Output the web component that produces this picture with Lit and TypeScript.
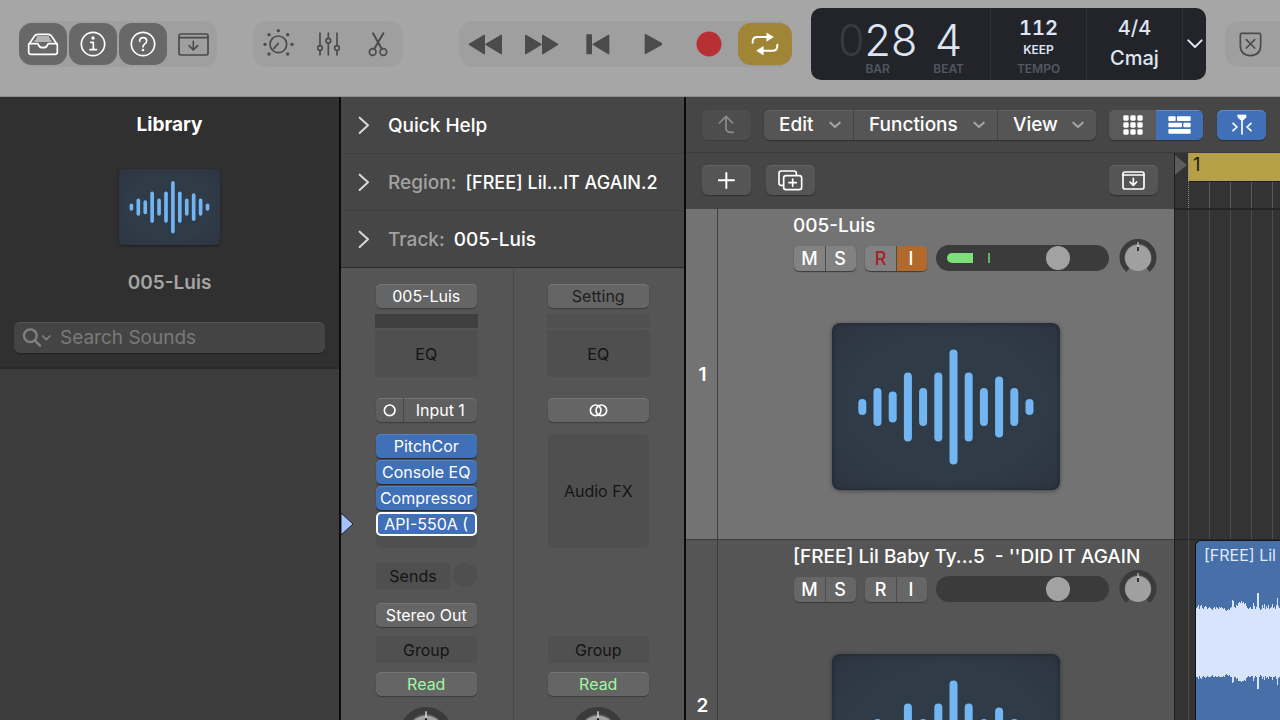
import { LitElement, html, svg, css, nothing } from "lit";
import { customElement, property } from "lit/decorators.js";

const base = css`
  * { box-sizing: border-box; }
  :host { font-family: Inter, "Liberation Sans", sans-serif; }
  button, input {
    font: inherit; color: inherit; border: 0; margin: 0; padding: 0;
    background: none; outline: none;
  }
  button {
    display: flex; align-items: center; justify-content: center;
    white-space: nowrap; cursor: default;
  }
  svg { display: block; flex: none; }
`;

const stroke = (w: number, h: number, body: unknown, width = 4) => html`
  <svg width=${Math.round(w / 3)} height=${Math.round(h / 3)} viewBox="0 0 ${w} ${h}" fill="none"
    stroke="currentColor" stroke-width=${width} stroke-linecap="round" stroke-linejoin="round"
    aria-hidden="true">${body}</svg>`;

const icons = {
  library: stroke(96, 72, svg`
    <path d="M5 38V60q0 7 7 7H84q7 0 7-7V38L74 13q-4-6-10-6H32q-6 0-10 6Z"/>
    <path d="M6 35H30q4 0 5 5q3 7 13 7q10 0 13-7q1-5 5-5H90"/>
    <path stroke-width="3" d="M31 15H65M28 21H68M24 27H72"/>`, 5),
  info: stroke(78, 78, svg`
    <circle cx="39" cy="39" r="35"/><path d="M32 34h8v22M30 56h19"/>
    <circle cx="39" cy="21" r="5" fill="currentColor" stroke="none"/>`, 5),
  help: stroke(78, 78, svg`
    <circle cx="39" cy="39" r="35"/><path d="M29 31q0-11 10-11q11 0 11 10q0 6-7 10q-4 3-4 8"/>
    <circle cx="39" cy="57" r="4" fill="currentColor" stroke="none"/>`, 5),
  drawer: stroke(93, 69, svg`
    <rect x="3" y="3" width="87" height="63" rx="5"/><path d="M3 14H90M46 25V49M33 38L46 51L59 38"/>`, 5),
  dial: stroke(93, 93, svg`
    <circle cx="46" cy="46" r="25"/><path d="M46 43L32 59"/>
    <g fill="currentColor" stroke="none"><circle cx="46" cy="5" r="5"/><circle cx="18" cy="17" r="5"/>
    <circle cx="74" cy="17" r="5"/><circle cx="6" cy="46" r="5"/><circle cx="87" cy="46" r="5"/>
    <circle cx="18" cy="75" r="5"/><circle cx="74" cy="75" r="5"/></g>`, 5),
  mixer: stroke(69, 72, svg`
    <path d="M9 3V40M9 56V69M34 3V18M34 34V69M60 3V40M60 56V69"/>
    <circle cx="9" cy="48" r="7"/><circle cx="34" cy="26" r="7"/><circle cx="60" cy="48" r="7"/>`, 5),
  scissors: stroke(60, 75, svg`
    <path stroke-width="6" d="M15 4L41 50M46 4L19 50"/>
    <circle cx="14" cy="60" r="10"/><circle cx="46" cy="60" r="10"/>`, 5),
  rewind: stroke(105, 63, svg`<path fill="currentColor" d="M4 31L49 4V59ZM54 31L100 4V59Z"/>`),
  forward: stroke(105, 63, svg`<path fill="currentColor" d="M101 31L56 4V59ZM51 31L5 4V59Z"/>`),
  start: stroke(72, 63, svg`<path fill="currentColor" d="M3 3H16V59H3ZM22 31L68 4V59Z"/>`),
  play: stroke(54, 66, svg`<path fill="currentColor" d="M4 5L55 33L4 61Z"/>`),
  record: html`<svg width="26" height="26" viewBox="0 0 26 26" aria-hidden="true"><circle cx="13" cy="13" r="12.5" fill="#b93034"/></svg>`,
  cycle: stroke(84, 72, svg`
    <path d="M5 32V29Q5 15 19 15H50M79 38V41Q79 56 65 56H34" stroke-width="6"/>
    <path d="M48 4L67 15L48 27ZM36 44L17 56L36 68Z" fill="currentColor" stroke-width="2"/>`),
  shield: stroke(69, 75, svg`
    <path d="M8 4H61q4 0 4 4V40Q65 70 34 71Q4 70 4 40V8q0-4 4-4ZM22 23L47 48M47 23L22 48"/>`, 5),
  chevronDown: stroke(48, 30, svg`<path d="M4 4L24 24L44 4"/>`, 6),
  chevronSmall: stroke(36, 24, svg`<path d="M4 5L18 18L32 5"/>`, 6),
  chevronRight: stroke(36, 54, svg`<path d="M5 5L30 28L5 51"/>`, 6),
  up: stroke(51, 57, svg`<path d="M24 4V40Q24 52 38 52H46M4 24L24 4L44 24"/>`, 5),
  plus: stroke(51, 51, svg`<path d="M25 3V48M2 25H48"/>`, 6),
  duplicate: stroke(75, 63, svg`
    <path d="M16 46H9q-6 0-6-6V10q0-7 7-7H48q7 0 7 7V14"/>
    <rect x="17" y="17" width="54" height="42" rx="7"/><path d="M44 27V49M33 38H55"/>`, 5),
  grid: stroke(60, 60, svg`<g fill="currentColor" stroke="none">${[1, 22, 43].map((y) =>
    [1, 22, 43].map((x) => svg`<rect x=${x} y=${y} width="16" height="16" rx="4"/>`))}</g>`),
  rows: stroke(69, 54, svg`<g fill="currentColor" stroke="none">
    <rect x="1" y="1" width="22" height="14" rx="3"/><rect x="27" y="1" width="41" height="14" rx="3"/>
    <rect x="1" y="20" width="41" height="14" rx="3"/><rect x="46" y="20" width="22" height="14" rx="3"/>
    <rect x="1" y="39" width="67" height="14" rx="3"/></g>`),
  catchHead: stroke(60, 63, svg`
    <path d="M18 3H42V10L34 18H26L18 10Z" fill="currentColor" stroke-width="2"/>
    <path d="M30 18V60M3 28L15 39L3 50M57 28L45 39L57 50"/>`, 5),
  importTrack: stroke(69, 57, svg`
    <rect x="3" y="3" width="63" height="51" rx="6"/><path d="M3 12H66M34 22V42M24 33L34 43L44 33"/>`, 5),
  stereo: stroke(57, 39, svg`<circle cx="20" cy="19" r="16"/><circle cx="37" cy="19" r="16"/>`, 5),
  mono: stroke(39, 39, svg`<circle cx="20" cy="19" r="16"/>`, 5),
  search: stroke(90, 57, svg`
    <circle cx="25" cy="23" r="19"/><path d="M39 38L54 53"/><path stroke-width="5" d="M62 24L73 35L84 24"/>`, 7),
};

@customElement("wave-icon")
class WaveIcon extends LitElement {
  static bars = [16, 38, 31, 69, 38, 69, 115, 69, 38, 61, 38, 16];
  static styles = [base, css`
    :host {
      display: block; overflow: hidden; border-radius: 8px;
      background: radial-gradient(ellipse at center, #303b48 60%, #2d3440 100%);
      box-shadow: 0 1px 4px #0006, inset 0 0 5px #0005;
    }
    svg { width: 100%; height: 100%; }
    rect { fill: #72b5f3; }
  `];
  render() {
    return html`<svg viewBox="0 0 228 167" preserveAspectRatio="xMidYMid slice" aria-hidden="true">
      ${WaveIcon.bars.map((h, i) => svg`
        <rect x=${26.3 + i * 15.2} y=${84 - h / 2} width="8" height=${h} rx="4"/>`)}
    </svg>`;
  }
}

@customElement("pan-knob")
class PanKnob extends LitElement {
  @property() label = "Pan";
  static styles = [base, css`
    :host { display: block; position: relative; width: 38px; height: 38px; }
    svg { width: 100%; height: 100%; }
    input { position: absolute; inset: 0; width: 100%; height: 100%; opacity: 0; }
  `];
  render() {
    return html`
      <svg viewBox="0 0 38 38" aria-hidden="true">
        <path d="M9 31A16 16 0 1 1 29 31" fill="none" stroke="#3b3b3b" stroke-width="5"/>
        <circle cx="19" cy="19" r="13" fill="#a0a0a0"/>
        <path d="M19 3V8" stroke="#ddd" stroke-width="1"/>
        <path d="M19 8V12" stroke="#111" stroke-width="1.5"/>
      </svg>
      <input type="range" min="-64" max="63" value="0" aria-label=${this.label} />`;
  }
}

@customElement("tool-bar")
class ToolBar extends LitElement {
  static styles = [base, css`
    :host {
      display: flex; align-items: flex-start; height: 97px; padding: 8px 0 0 19px;
      background: #a6a6a6; border-bottom: 1px solid #8d8d8d; color: #4b4b4b; overflow: hidden;
    }
    .group {
      display: grid; grid-auto-flow: column; grid-auto-columns: 1fr; gap: 2px; flex: none;
      height: 46px; margin-top: 13px; padding: 2px 0; border-radius: 14px; background: #9f9f9f;
    }
    .views { width: 198px; margin-right: 36px; }
    .editors { width: 150px; margin-right: 56px; gap: 0; }
    .transport { width: 333px; margin-right: 19px; }
    .modes { flex: 1 0 200px; margin-left: 19px; grid-auto-columns: 50px; }
    button { border-radius: 13px; }
    .on { background: #686868; color: #fff; }
    .cycle { background: #a08537; color: #fff; }
    .lcd {
      display: flex; flex: none; width: 395px; height: 72px; border-radius: 10px;
      background: #22242a; color: #dfe4f2; overflow: hidden;
    }
    .cell {
      display: flex; flex-direction: column; align-items: center; width: 96px; padding-top: 8px;
      border-left: 1px solid #2f3137; font-size: 20px; font-weight: 600; line-height: 24px;
      font-variant-numeric: tabular-nums;
    }
    .key { gap: 6px; font-weight: 500; }
    .position { display: flex; width: 179px; padding: 14px 0 0 27px; gap: 16px; }
    .counter { display: flex; flex-direction: column; align-items: center; gap: 5px; }
    .big { font-size: 43px; font-weight: 300; line-height: 36px; }
    .dim { color: #383a40; }
    .unit { font-size: 12px; line-height: 12px; font-weight: 600; color: #525662; }
    .bar { margin-left: 24px; }
    .keep { font-size: 12px; line-height: 20px; font-weight: 600; }
    .tempo .unit { margin-top: 3px; }
    .more { flex: 1; border-left: 1px solid #2f3137; border-radius: 0; color: #dfe4f2; }
  `];
  render() {
    return html`
      <div class="group views">
        <button class="on" aria-label="Library">${icons.library}</button>
        <button class="on" aria-label="Inspector">${icons.info}</button>
        <button class="on" aria-label="Quick Help">${icons.help}</button>
        <button aria-label="Toolbar">${icons.drawer}</button>
      </div>
      <div class="group editors">
        <button aria-label="Smart Controls">${icons.dial}</button>
        <button aria-label="Mixer">${icons.mixer}</button>
        <button aria-label="Editors">${icons.scissors}</button>
      </div>
      <div class="group transport">
        <button aria-label="Rewind">${icons.rewind}</button>
        <button aria-label="Forward">${icons.forward}</button>
        <button aria-label="Go to Beginning">${icons.start}</button>
        <button aria-label="Play">${icons.play}</button>
        <button aria-label="Record">${icons.record}</button>
        <button class="cycle" aria-label="Cycle">${icons.cycle}</button>
      </div>
      <div class="lcd">
        <div class="position">
          <div class="counter"><span class="big"><span class="dim">0</span>28</span><span class="unit">BAR</span></div>
          <div class="counter"><span class="big">4</span><span class="unit">BEAT</span></div>
        </div>
        <div class="cell tempo"><span>112</span><span class="keep">KEEP</span><span class="unit">TEMPO</span></div>
        <div class="cell key"><span>4/4</span><span>Cmaj</span></div>
        <button class="more" aria-label="Display Mode">${icons.chevronDown}</button>
      </div>
      <div class="group modes"><button aria-label="Replace">${icons.shield}</button></div>`;
  }
}

@customElement("library-panel")
class LibraryPanel extends LitElement {
  static styles = [base, css`
    :host { display: flex; flex-direction: column; background: #3c3c3c; }
    .head {
      display: flex; flex-direction: column; align-items: center; padding: 16px 14px 14px;
      background: #303030; border-bottom: 2px solid #2b2b2b;
    }
    h2 { margin: 0 0 32px; font-size: 19px; line-height: 24px; font-weight: 700; color: #fff; }
    wave-icon { width: 101px; height: 76px; border-radius: 4px; box-shadow: 0 1px 3px #0006; }
    .name { margin: 26px 0 27px; font-size: 19px; line-height: 24px; font-weight: 600; color: #a5a5a5; }
    .search {
      display: flex; align-items: center; gap: 8px; width: 100%; height: 31px; padding: 0 8px 2px;
      border-radius: 6px; background: #444; border-top: 1px solid #555; color: #808080;
      box-shadow: 0 1px 1px #222;
    }
    input { flex: 1; min-width: 0; font-size: 19px; color: #ddd; }
    input::placeholder { color: #7a7a7a; opacity: 1; }
  `];
  render() {
    return html`
      <div class="head">
        <h2>Library</h2>
        <wave-icon></wave-icon>
        <div class="name">005-Luis</div>
        <label class="search">${icons.search}<input type="text" placeholder="Search Sounds" aria-label="Search Sounds" /></label>
      </div>`;
  }
}

@customElement("inspector-panel")
class InspectorPanel extends LitElement {
  static styles = [base, css`
    :host {
      display: flex; flex-direction: column; background: #555;
      border-left: 2px solid #0a0a0a; border-right: 2px solid #0a0a0a; overflow: hidden;
    }
    .row {
      width: 100%; height: 57px; flex: none; justify-content: flex-start; padding: 0 17px;
      gap: 18px; background: #464646; border-bottom: 1px solid #3f3f3f;
      color: #fff; font-size: 19px; font-weight: 500;
    }
    .row:nth-of-type(3) { border-bottom: 1px solid #2c2c2c; }
    .row svg { color: #d8d8d8; }
    .title { display: flex; align-items: baseline; gap: 9px; }
    .key { color: #a2a2a2; font-weight: 500; }
    .long { font-size: 18px; }
    .strips { flex: 1; display: grid; grid-template-columns: 1fr 1fr; min-height: 0; }
    .strip {
      position: relative; display: flex; flex-direction: column; align-items: stretch;
      padding: 16px 36px 0 35px; font-size: 16px; line-height: 24px; color: #141414;
    }
    .strip + .strip { border-left: 1px solid #474747; padding: 16px 35px 0 34px; }
    .chip, .split {
      height: 24px; flex: none; border-radius: 5px; background: #656565; color: #fff;
      box-shadow: 0 1px 1px #3b3b3b, inset 0 1px 0 #757575; overflow: hidden;
    }
    .dark { color: #1e1e1e; }
    .green { color: #a3f5a3; }
    .split { display: grid; grid-template-columns: 27px 1fr; background: #5e5e5e; }
    .split button + button { border-left: 1px solid #484848; }
    .gain { height: 14px; margin: 6px -1px 0; background: #505050; }
    .gain.full { background: #404040; }
    .well { flex: none; background: #4f4f4f; border-radius: 3px; color: #141414; }
    .eq { height: 47px; margin: 2px -1px 21px; }
    .fx {
      display: flex; flex-direction: column; gap: 2px; height: 114px; margin-top: 12px;
      border-radius: 6px;
    }
    .fx .chip { background: #4070b8; box-shadow: 0 1px 1px #2a2a2a, inset 0 1px 0 #5483c6; }
    .fx .chip.focus { border: 2px solid #fff; box-shadow: none; }
    .sends { display: grid; grid-template-columns: 74px 24px; justify-content: space-between; height: 26px; margin-top: 15px; }
    .round { width: 24px; height: 24px; border-radius: 50%; background: #4f4f4f; }
    .out { margin-top: 14px; }
    .none { height: 38px; flex: none; }
    .group { height: 27px; margin: 9px 0; background: #505050; }
    pan-knob { width: 54px; height: 54px; margin: 11px auto 0; flex: none; }
    .pointer { position: absolute; left: 0; top: 244px; }
  `];

  row(key: string, text: string) {
    return html`<button class="row">${icons.chevronRight}
      <span class="title">${key ? html`<span class="key">${key}</span>` : nothing}<span
        class=${text.length > 16 ? "long" : ""}>${text}</span></span></button>`;
  }

  render() {
    const plugins = ["PitchCor", "Console EQ", "Compressor", "API-550A ("];
    return html`
      ${this.row("", "Quick Help")}
      ${this.row("Region:", "[FREE] Lil...IT AGAIN.2")}
      ${this.row("Track:", "005-Luis")}
      <div class="strips">
        <section class="strip">
          <button class="chip">005-Luis</button>
          <div class="gain full"></div>
          <button class="well eq">EQ</button>
          <div class="split"><button aria-label="Mono">${icons.mono}</button><button>Input 1</button></div>
          <div class="well fx">
            ${plugins.map((p, i) => html`<button class="chip ${i === 3 ? "focus" : ""}">${p}</button>`)}
          </div>
          <div class="sends"><button class="well">Sends</button><button class="round" aria-label="Send Level"></button></div>
          <button class="chip out">Stereo Out</button>
          <button class="well group">Group</button>
          <button class="chip green">Read</button>
          <pan-knob></pan-knob>
          <svg class="pointer" width="13" height="24" viewBox="0 0 13 24" aria-hidden="true">
            <path d="M0 1L12 12L0 23Z" fill="#a4c2fb" stroke="#1b2433" stroke-width="1"/>
          </svg>
        </section>
        <section class="strip">
          <button class="chip dark">Setting</button>
          <div class="gain"></div>
          <button class="well eq">EQ</button>
          <button class="chip" aria-label="Stereo">${icons.stereo}</button>
          <button class="well fx">Audio FX</button>
          <div class="sends"></div>
          <div class="none"></div>
          <button class="well group">Group</button>
          <button class="chip green">Read</button>
          <pan-knob></pan-knob>
        </section>
      </div>`;
  }
}

@customElement("track-header")
class TrackHeader extends LitElement {
  @property({ type: Number }) number = 1;
  @property() name = "";
  @property({ type: Boolean, reflect: true }) selected = false;
  static styles = [base, css`
    :host {
      display: grid; grid-template-columns: 32px 1fr; height: 331px; flex: none;
      background: #555; border-bottom: 1px solid #3c3c3c; color: #fff;
    }
    :host([selected]) { background: #737373; }
    .number {
      display: flex; align-items: center; justify-content: center; padding-left: 2px;
      border-right: 1px solid #3e3e3e; font-size: 19px; font-weight: 600;
    }
    .body { display: flex; flex-direction: column; padding-top: 5px; }
    .name { padding-left: 75px; font-size: 19px; line-height: 24px; font-weight: 500; white-space: pre; }
    .controls { display: flex; align-items: center; height: 38px; margin-top: 1px; padding-left: 76px; gap: 9px; }
    .pair {
      display: grid; grid-template-columns: 1fr 1fr; width: 62px; height: 25px; border-radius: 5px;
      overflow: hidden; background: #666; box-shadow: 0 1px 1px #3a3a3a; font-size: 18px; font-weight: 500;
    }
    :host([selected]) .pair { background: #828282; }
    .pair button + button { border-left: 1px solid #4c4c4c; padding-right: 2px; }
    .armed { color: #a22227; }
    .monitor { background: #b26a2c; }
    .fader { position: relative; width: 173px; height: 26px; margin-right: 1px; }
    .fader input {
      appearance: none; display: block; width: 100%; height: 26px; border-radius: 13px;
      background: #3b3b3b;
    }
    .fader input::-webkit-slider-thumb {
      appearance: none; width: 24px; height: 24px; border-radius: 50%; background: #a2a2a2;
    }
    .level { position: absolute; left: 11px; top: 8px; width: 26px; height: 10px; border-radius: 5px 0 0 5px; background: #7de17b; }
    .peak { position: absolute; left: 52px; top: 8px; width: 2px; height: 10px; background: #5fb55e; }
    wave-icon { width: 228px; height: 167px; margin-top: 46px; align-self: center; }
  `];
  render() {
    const on = this.selected;
    return html`
      <div class="number">${this.number}</div>
      <div class="body">
        <div class="name">${this.name}</div>
        <div class="controls">
          <div class="pair"><button aria-label="Mute">M</button><button aria-label="Solo">S</button></div>
          <div class="pair">
            <button class=${on ? "armed" : ""} aria-label="Record Enable">R</button>
            <button class=${on ? "monitor" : ""} aria-label="Input Monitoring">I</button>
          </div>
          <div class="fader">
            <input type="range" min="0" max="100" value="74" aria-label="Volume" />
            ${on ? html`<span class="level"></span><span class="peak"></span>` : nothing}
          </div>
          <pan-knob></pan-knob>
        </div>
        <wave-icon></wave-icon>
      </div>`;
  }
}

const peaks = [
  2, 3, 5, 1, 4, 5, 2, 1, 3, 4, 3, 1, 2, 3, 2, 1, 0, 2, 3, 1, 3, 2, 1, 3, 2, 3, 2, 1, 2, 0, -1, 0, 1, 0, 2, 3,
  10, 9, 3, 2, 5, 4, 7, 8, 7, 9, 7, 8, 6, 7, 4, 2, 1, 2, 3, 1, 1, 7, 4, 1, 3, 17, 17, 2, 0, 1, 5, 2, 6, 1, 4, 2,
  5, 1, 2, 3, 6, 2, 3, 1, 5, 12, 4, 2, 3, 5, 8, 3, 2, 6, 4, 1, 3, 9, 5, 2,
];

@customElement("arrange-area")
class ArrangeArea extends LitElement {
  static styles = [base, css`
    :host { display: flex; flex-direction: column; overflow: hidden; background: #2f2f2f; border-left: 1px solid #1e1e1e; }
    .ruler {
      position: relative; display: flex; align-items: flex-start; height: 57px; flex: none;
      border-bottom: 2px solid #242424; background: #333;
      background-image: repeating-linear-gradient(90deg, transparent 0 20px, #5a5a5a 20px 21px);
      background-position: 14px 0; background-repeat: no-repeat;
    }
    .marker { width: 13px; height: 29px; background: #333; }
    .cycle {
      flex: 1; height: 29px; padding-left: 5px; background: #b5a047; color: #1a1a1a;
      border-bottom: 1px solid #1f1f1f; font-size: 18px; line-height: 23px;
    }
    .dots { position: absolute; left: 13px; top: 0; bottom: 0; border-left: 1px dotted #8a8a8a; }
    .lane {
      height: 330px; flex: none; padding-left: 20px; border-bottom: 1px solid #262626;
      background: repeating-linear-gradient(90deg, #4d4d4d 0 1px, #333 1px 21px) 13px 0 no-repeat #333;
    }
    .clip {
      height: 100%; min-width: 96px; border-radius: 6px 0 0 6px; background: #4870a8; color: #dfe9fb;
      border: 1px solid #101418; border-right: 0; overflow: hidden;
    }
    .label { padding-left: 8px; font-size: 16px; line-height: 28px; white-space: nowrap; height: 48px; }
    .wave { fill: #d7e4fb; }
  `];
  render() {
    const points = [
      ...peaks.map((p, i) => `${i},${21 - p} ${i + 1},${21 - p}`),
      ...peaks.map((p, i) => `${i + 1},${86 + Math.round(p * 0.8)} ${i},${86 + Math.round(p * 0.8)}`).reverse(),
    ].join(" ");
    return html`
      <div class="ruler">
        <svg class="marker" viewBox="0 0 13 29" aria-hidden="true"><path d="M0 2L12 12L0 22Z" fill="#5c5c5c"/></svg>
        <div class="cycle">1</div>
        <span class="dots"></span>
      </div>
      <div class="lane"></div>
      <div class="lane">
        <div class="clip">
          <div class="label">[FREE] Lil Baby Type Beat</div>
          <svg width="96" height="110" viewBox="0 0 96 110" aria-hidden="true"><polygon class="wave" points=${points}/></svg>
        </div>
      </div>`;
  }
}

@customElement("tracks-area")
class TracksArea extends LitElement {
  static styles = [base, css`
    :host {
      display: grid; grid-template: 56px minmax(0, 1fr) / 488px minmax(0, 1fr);
      background: #464646; overflow: hidden;
    }
    .menus { grid-column: 1 / -1; display: flex; align-items: center; padding: 0 0 0 16px; border-bottom: 1px solid #3b3b3b; }
    .key {
      width: 49px; height: 30px; flex: none; border-radius: 6px; background: #555; color: #fff;
      box-shadow: 0 1px 1px #303030, inset 0 1px 0 #636363;
    }
    .off { background: #4d4d4d; color: #8d8d8d; box-shadow: 0 1px 1px #3c3c3c; }
    .bar {
      display: flex; height: 30px; flex: none; margin: 0 13px; border-radius: 6px; background: #555;
      color: #fff; overflow: hidden; box-shadow: 0 1px 1px #303030, inset 0 1px 0 #636363;
    }
    .bar button { justify-content: space-between; padding: 0 12px 0 15px; font-size: 19px; font-weight: 500; }
    .bar button + button { border-left: 1px solid #424242; }
    .bar svg { color: #a5a5a5; }
    .edit { width: 89px; }
    .functions { width: 144px; }
    .view { width: 99px; }
    .toggle { display: grid; grid-template-columns: 1fr 1fr; width: 94px; margin-right: 14px; overflow: hidden; }
    .toggle button, .blue { background: #4070b8; }
    .toggle button:first-child { background: #5a5a5a; }
    .toggle button:last-child { box-shadow: inset 0 1px 0 #5c8bd0; }
    .blue { box-shadow: 0 1px 1px #303030, inset 0 1px 0 #5c8bd0; }
    .list { display: flex; flex-direction: column; min-height: 0; overflow: hidden; }
    .tools { display: flex; align-items: center; gap: 15px; height: 56px; flex: none; padding: 0 16px 2px; }
    .tools .key:last-child { margin-left: auto; }
  `];
  render() {
    return html`
      <div class="menus">
        <button class="key off" aria-label="Up">${icons.up}</button>
        <div class="bar">
          <button class="edit">Edit ${icons.chevronSmall}</button>
          <button class="functions">Functions ${icons.chevronSmall}</button>
          <button class="view">View ${icons.chevronSmall}</button>
        </div>
        <div class="key toggle">
          <button aria-label="Live Loops">${icons.grid}</button>
          <button aria-label="Tracks">${icons.rows}</button>
        </div>
        <button class="key blue" aria-label="Catch Playhead">${icons.catchHead}</button>
      </div>
      <div class="list">
        <div class="tools">
          <button class="key" aria-label="Add Track">${icons.plus}</button>
          <button class="key" aria-label="Duplicate Track">${icons.duplicate}</button>
          <button class="key" aria-label="Header Import">${icons.importTrack}</button>
        </div>
        <track-header selected .number=${1} name="005-Luis"></track-header>
        <track-header .number=${2} name="[FREE] Lil Baby Ty...5  - ''DID IT AGAIN"></track-header>
      </div>
      <arrange-area></arrange-area>`;
  }
}

@customElement("app-root")
class AppRoot extends LitElement {
  static styles = [base, css`
    :host { display: flex; flex-direction: column; height: 100vh; overflow: hidden; background: #333; }
    main { flex: 1; display: grid; grid-template: minmax(0, 1fr) / 339px 347px minmax(0, 1fr); min-height: 0; }
  `];
  render() {
    return html`
      <tool-bar></tool-bar>
      <main>
        <library-panel></library-panel>
        <inspector-panel></inspector-panel>
        <tracks-area></tracks-area>
      </main>`;
  }
}
